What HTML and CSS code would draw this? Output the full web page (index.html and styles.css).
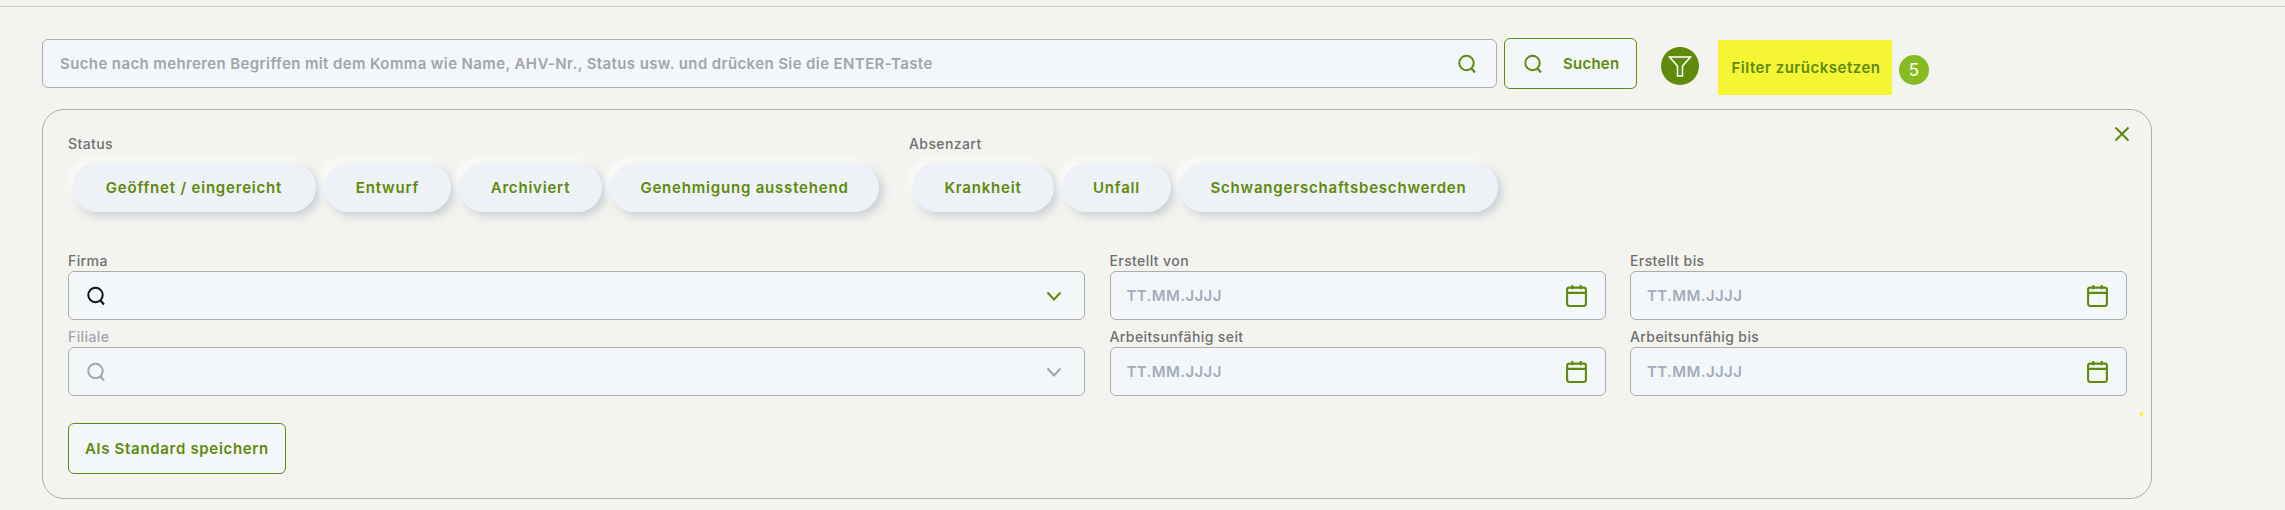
FILE: index.html
```html
<!DOCTYPE html>
<html lang="de">
<head>
  <meta charset="UTF-8">
  <title>Absenzen</title>
  <link rel="stylesheet" href="styles.css">
</head>
<body>
  <div class="topbar"></div>

  <div class="toolbar">
    <div class="search-box">
      <span class="placeholder">Suche nach mehreren Begriffen mit dem Komma wie Name, AHV-Nr., Status usw. und drücken Sie die ENTER-Taste</span>
      <svg class="icon green" viewBox="0 0 20 20"><circle cx="9.5" cy="9" r="7.2"/><path d="M14.5 14.5L18 18.5"/></svg>
    </div>
    <button class="btn search-btn">
      <svg class="icon green" viewBox="0 0 20 20"><circle cx="9.5" cy="9" r="7.2"/><path d="M14.5 14.5L18 18.5"/></svg>
      Suchen
    </button>
    <div class="filter-toggle">
      <svg viewBox="0 0 24 24"><path d="M1.5 3h21l-8 9v10h-5V12z"/></svg>
    </div>
    <div class="filter-reset">Filter zurücksetzen</div>
    <div class="badge">5</div>
  </div>

  <div class="panel">
    <svg class="close" viewBox="0 0 16 16"><path d="M1.5 1.5l13 13M14.5 1.5l-13 13"/></svg>
    <span class="speck"></span>

    <div class="chip-groups">
      <div class="chip-group">
        <p class="label">Status</p>
        <div class="chips chips-status">
          <div class="chip">Geöffnet / eingereicht</div>
          <div class="chip">Entwurf</div>
          <div class="chip">Archiviert</div>
          <div class="chip">Genehmigung ausstehend</div>
        </div>
      </div>
      <div class="chip-group">
        <p class="label">Absenzart</p>
        <div class="chips chips-type">
          <div class="chip">Krankheit</div>
          <div class="chip">Unfall</div>
          <div class="chip">Schwangerschaftsbeschwerden</div>
        </div>
      </div>
    </div>

    <div class="fields">
      <div class="field">
        <p class="label">Firma</p>
        <div class="input">
          <svg class="icon dark" viewBox="0 0 20 20"><circle cx="9.5" cy="9" r="7.2"/><path d="M14.5 14.5L18 18.5"/></svg>
          <svg class="chevron green" viewBox="0 0 16 10"><path d="M1.5 1.5L8 8.5l6.5-7"/></svg>
        </div>
      </div>
      <div class="field">
        <p class="label">Erstellt von</p>
        <div class="input date">
          <span class="date-hint">TT.MM.JJJJ</span>
          <svg class="calendar" viewBox="0 0 20 22"><rect x="1" y="3.5" width="18" height="17.5" rx="2"/><path d="M1 8.5h18M6 1v4M14 1v4"/></svg>
        </div>
      </div>
      <div class="field">
        <p class="label">Erstellt bis</p>
        <div class="input date">
          <span class="date-hint">TT.MM.JJJJ</span>
          <svg class="calendar" viewBox="0 0 20 22"><rect x="1" y="3.5" width="18" height="17.5" rx="2"/><path d="M1 8.5h18M6 1v4M14 1v4"/></svg>
        </div>
      </div>
      <div class="field">
        <p class="label muted">Filiale</p>
        <div class="input">
          <svg class="icon grey" viewBox="0 0 20 20"><circle cx="9.5" cy="9" r="7.2"/><path d="M14.5 14.5L18 18.5"/></svg>
          <svg class="chevron grey" viewBox="0 0 16 10"><path d="M1.5 1.5L8 8.5l6.5-7"/></svg>
        </div>
      </div>
      <div class="field">
        <p class="label">Arbeitsunfähig seit</p>
        <div class="input date">
          <span class="date-hint">TT.MM.JJJJ</span>
          <svg class="calendar" viewBox="0 0 20 22"><rect x="1" y="3.5" width="18" height="17.5" rx="2"/><path d="M1 8.5h18M6 1v4M14 1v4"/></svg>
        </div>
      </div>
      <div class="field">
        <p class="label">Arbeitsunfähig bis</p>
        <div class="input date">
          <span class="date-hint">TT.MM.JJJJ</span>
          <svg class="calendar" viewBox="0 0 20 22"><rect x="1" y="3.5" width="18" height="17.5" rx="2"/><path d="M1 8.5h18M6 1v4M14 1v4"/></svg>
        </div>
      </div>
    </div>

    <button class="btn save-btn">Als Standard speichern</button>
  </div>
</body>
</html>
```

FILE: styles.css
```css
* {
  box-sizing: border-box;
}
body {
  margin: 0;
  background: #f3f4ef;
  font-family: Inter, Arial, sans-serif;
  font-size: 15px;
  color: #5f8a0b;
}
p {
  margin: 0;
}
svg {
  fill: none;
  stroke: currentColor;
  stroke-width: 2;
  flex: none;
}
.green {
  color: #5f8a0b;
}
.dark {
  color: #111;
}
.grey {
  color: #a1a5ad;
}
.topbar {
  height: 7px;
  border-bottom: 1px solid #cfcfcf;
}
.toolbar {
  display: flex;
  align-items: flex-start;
  padding: 31px 0 0 42px;
}
.search-box {
  width: 1455px;
  height: 49px;
  margin-top: 1px;
  margin-right: 7px;
  padding: 0 19px 0 17px;
  display: flex;
  align-items: center;
  justify-content: space-between;
  background: #f4f7fa;
  border: 1px solid #adadad;
  border-radius: 6px;
}
.placeholder {
  color: #a1a5ad;
  font-weight: 600;
  letter-spacing: 0.39px;
}
.icon {
  width: 20px;
  height: 20px;
}
.btn {
  display: flex;
  align-items: center;
  font-family: inherit;
  font-size: 15px;
  font-weight: 600;
  color: #5f8a0b;
  background: #f4f7fa;
  border: 1px solid #5f8a0b;
  border-radius: 6px;
}
.search-btn {
  width: 133px;
  height: 51px;
  padding: 0 0 0 18px;
  gap: 20px;
  letter-spacing: 0.25px;
}
.filter-toggle {
  width: 38px;
  height: 38px;
  margin: 9px 0 0 24px;
  display: flex;
  align-items: center;
  justify-content: center;
  background: #5f8a0b;
  border-radius: 50%;
  color: #fff;
}
.filter-toggle svg {
  width: 24px;
  height: 24px;
  stroke-width: 1.6;
}
.filter-reset {
  width: 174px;
  height: 55px;
  margin: 2px 0 0 19px;
  padding-left: 2px;
  display: flex;
  align-items: center;
  justify-content: center;
  background: #f4f633;
  font-weight: 600;
  letter-spacing: 0.5px;
}
.badge {
  width: 30px;
  height: 30px;
  margin: 17px 0 0 7px;
  display: flex;
  align-items: center;
  justify-content: center;
  background: #86bc22;
  border-radius: 50%;
  color: #fff;
  font-size: 17px;
}
.panel {
  position: relative;
  width: 2110px;
  height: 390px;
  margin: 14px 0 0 42px;
  padding: 24px 24px 0 25px;
  border: 1px solid #adadad;
  border-radius: 22px;
}
.close {
  position: absolute;
  top: 16px;
  right: 21px;
  width: 16px;
  height: 16px;
}
.speck {
  position: absolute;
  left: 2097px;
  top: 302px;
  width: 3px;
  height: 4px;
  background: #f4f633;
}
.chip-groups {
  display: flex;
  gap: 30px;
}
.label {
  height: 20px;
  line-height: 19px;
  font-size: 14px;
  font-weight: 500;
  letter-spacing: 0.4px;
  color: #6f6f6f;
}
.label.muted {
  color: #a1a5ad;
}
.chips {
  display: grid;
  gap: 8px;
  margin: 9px 0 0 4px;
}
.chips-status {
  grid-template-columns: 244px 127px 143px 269px;
}
.chips-type {
  grid-template-columns: 142px 109px 319px;
  margin-left: 3px;
}
.chip {
  height: 49px;
  display: flex;
  align-items: center;
  justify-content: center;
  font-weight: 600;
  letter-spacing: 0.8px;
  background: #eef1f5;
  border-radius: 25px;
  box-shadow: 4px 4px 8px rgba(170, 175, 190, 0.55), -4px -4px 8px rgba(255, 255, 255, 0.8);
}
.fields {
  display: grid;
  grid-template-columns: 1017px 496px 497px;
  column-gap: 24.5px;
  row-gap: 7px;
  margin-top: 39px;
}
.input {
  height: 49px;
  padding: 0 22px 0 17px;
  display: flex;
  align-items: center;
  justify-content: space-between;
  background: #f4f7fa;
  border: 1px solid #adadad;
  border-radius: 6px;
}
.date-hint {
  color: #a4abbb;
  font-weight: 600;
  letter-spacing: 0.4px;
}
.input.date {
  padding: 0 18px 0 16px;
}
.chevron {
  width: 16px;
  height: 10px;
}
.calendar {
  width: 21px;
  height: 23px;
  color: #5f8a0b;
}
.save-btn {
  width: 218px;
  height: 51px;
  margin-top: 27px;
  justify-content: center;
  letter-spacing: 0.68px;
}
```
